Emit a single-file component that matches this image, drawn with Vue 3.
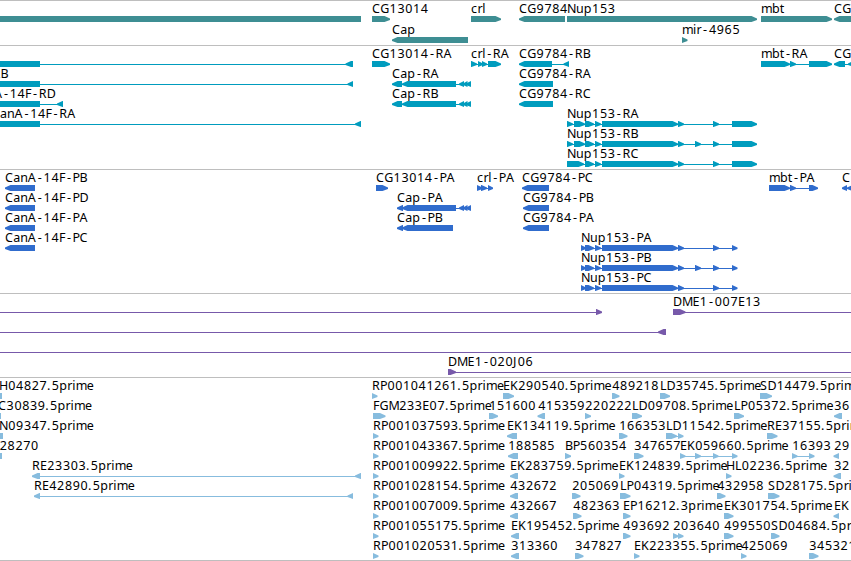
<template>
  <main class="browser">
    <section v-for="track in tracks" :key="track.name" class="track">
      <svg class="track-canvas" width="851" :height="track.height">
        <g v-for="(f, i) in track.features" :key="i" :fill="track.color">
          <rect
            v-if="f.line"
            :x="f.line[0]"
            :y="f.row * track.step + 18"
            :width="f.line[1] - f.line[0]"
            height="1"
            shape-rendering="crispEdges"
          />
          <polygon
            v-for="(b, k) in f.blocks"
            :key="k"
            :points="blockPoints(b, f.dir, f.row * track.step + 15)"
          />
          <text
            v-if="f.label"
            class="label"
            :x="charPositions(f.label, f.x)"
            :y="f.row * track.step + 12"
          >{{ f.label }}</text>
        </g>
      </svg>
    </section>
  </main>
</template>

<script setup>
const advances = {
  A: 8.3, B: 7.7, C: 8.3, D: 9, E: 7, F: 6.4, G: 9, H: 9, J: 4.6, K: 7.9,
  L: 6.5, M: 10.5, N: 9, P: 7.1, R: 8, S: 7.4,
  a: 7, b: 7.7, c: 6.4, e: 7, i: 3.5, l: 3.3, m: 11.1, n: 7.5, p: 8.1,
  r: 4.9, t: 4.5, u: 7.7, '-': 7.2, '.': 4.4,
}

const charPositions = (label, start) => {
  let x = start
  return [...label]
    .map((c) => {
      // narrow glyphs are centred in their wider cell
      let at = x
      if (c === '-') at += 1.6
      else if (/\d/.test(c)) at += 0.3
      x += advances[c] || 7.8
      return at.toFixed(2)
    })
    .join(' ')
}

// dir: 1 = forward strand, -1 = reverse strand, 0 = no arrow head
const blockPoints = ([a, b], dir, y) => {
  const head = Math.min(5.5, b - a)
  if (dir > 0) {
    return `${a},${y} ${b - head},${y} ${b},${y + 2.4} ${b},${y + 4} ${b - head},${y + 6} ${a},${y + 6}`
  }
  if (dir < 0) {
    return `${b},${y} ${a + head},${y} ${a},${y + 2.4} ${a},${y + 4} ${a + head},${y + 6} ${b},${y + 6}`
  }
  return `${a},${y} ${b},${y} ${b},${y + 6} ${a},${y + 6}`
}

const feature = (row, label, x, dir, blocks, line) => ({ row, label, x, dir, blocks, line })

const capTail = [[459, 464], [463, 467.5], [466, 471]]
const nupStart = [[567, 573], [574, 585], [585, 594], [595, 601]]
const nupMid = [[602, 678], [678, 684], [713, 719]]
const nupProtein = [[581, 586], [585, 594], [595, 601], ...nupMid, [732, 737.5]]

const tracks = [
  {
    name: 'genes',
    color: '#3e8e93',
    height: 44,
    step: 21,
    features: [
      feature(0, '', 0, 0, [[0, 361]]),
      feature(0, 'CG13014', 372, 1, [[372, 390]]),
      feature(0, 'crl', 471, 1, [[471, 501]]),
      feature(0, 'CG9784', 519, -1, [[519, 565]]),
      feature(0, 'Nup153', 567, 1, [[567, 757]]),
      feature(0, 'mbt', 761, 1, [[761, 832]]),
      feature(0, 'CG', 834, -1, [[834, 860]]),
      feature(1, 'Cap', 392, -1, [[392, 468]]),
      feature(1, 'mir-4965', 682, 1, [[682, 687.5]]),
    ],
  },
  {
    name: 'transcripts',
    color: '#009cbe',
    height: 123,
    step: 20,
    features: [
      feature(0, '', 0, 0, [[0, 40]], [40, 348]),
      feature(0, '', 0, -1, [[345.5, 353]]),
      feature(0, 'CG13014-RA', 372, 1, [[372, 390]]),
      feature(0, 'crl-RA', 471, 1, [[471, 477], [478, 483], [482, 487], [488, 501]], [471, 490]),
      feature(0, 'CG9784-RB', 519, -1, [[519, 552], [563.5, 569]], [552, 565]),
      feature(0, 'mbt-RA', 761, 1, [[761, 790], [790, 796], [809, 832]], [788, 810]),
      feature(0, 'CG', 834, -1, [[834, 845], [848, 860]], [844, 851]),
      feature(1, 'RB', -7.5, 0, [[0, 40]], [40, 350]),
      feature(1, '', 0, -1, [[347.5, 353]]),
      feature(1, 'Cap-RA', 392, -1, [[392, 402], [402, 456], ...capTail], [400, 468]),
      feature(1, 'CG9784-RA', 519, -1, [[519, 553]]),
      feature(2, 'A-14F-RD', -6, 0, [[0, 40]], [40, 60]),
      feature(2, '', 0, -1, [[57, 63]]),
      feature(2, 'Cap-RB', 392, -1, [[392, 402], [402, 456], ...capTail], [400, 468]),
      feature(2, 'CG9784-RC', 519, -1, [[519, 553]]),
      feature(3, 'anA-14F-RA', 0, 0, [[0, 40]], [40, 358]),
      feature(3, '', 0, -1, [[355, 361]]),
      feature(3, 'Nup153-RA', 567, 1, [...nupStart, ...nupMid, [732, 757]], [570, 735]),
      feature(4, 'Nup153-RB', 567, 1, [...nupStart, ...nupMid, [695, 701], [732, 757]], [570, 735]),
      feature(5, 'Nup153-RC', 567, 1, [[567, 584], ...nupStart.slice(2), ...nupMid, [732, 757]], [570, 735]),
    ],
  },
  {
    name: 'proteins',
    color: '#306ccd',
    height: 123,
    step: 20,
    features: [
      feature(0, 'CanA-14F-PB', 5, -1, [[5, 35]]),
      feature(1, 'CanA-14F-PD', 5, -1, [[5, 35]]),
      feature(2, 'CanA-14F-PA', 5, -1, [[5, 35]]),
      feature(3, 'CanA-14F-PC', 5, -1, [[5, 35]]),
      feature(0, 'CG13014-PA', 376, 1, [[376, 388]]),
      feature(0, 'crl-PA', 477, 1, [[477, 482.5], [481, 487], [488, 493]], [478, 490]),
      feature(0, 'CG9784-PC', 522, -1, [[522, 549]]),
      feature(0, 'mbt-PA', 769, 1, [[769, 790], [790, 796], [809, 818]], [788, 810]),
      feature(0, 'C', 842, -1, [[842, 847], [847, 853]], [844, 851]),
      feature(1, 'Cap-PA', 397, -1, [[397, 403], [402, 456], ...capTail], [400, 468]),
      feature(1, 'CG9784-PB', 523, -1, [[523, 549]]),
      feature(2, 'Cap-PB', 397, -1, [[397, 403], [402, 453]], [400, 405]),
      feature(2, 'CG9784-PA', 523, -1, [[523, 549]]),
      feature(3, 'Nup153-PA', 581, 1, nupProtein, [583, 735]),
      feature(4, 'Nup153-PB', 581, 1, [...nupProtein, [695, 701]], [583, 735]),
      feature(5, 'Nup153-PC', 581, 1, nupProtein, [583, 735]),
    ],
  },
  {
    name: 'clones',
    color: '#7759aa',
    height: 83,
    step: 20,
    features: [
      feature(0, '', 0, 1, [[596, 602]], [0, 599]),
      feature(0, 'DME1-007E13', 673, 1, [[673, 685.5]], [680, 851]),
      feature(1, '', 0, -1, [[658, 666]], [0, 662]),
      feature(2, '', 0, 0, [], [0, 851]),
      feature(3, 'DME1-020J06', 448, 1, [[448, 456]], [452, 851]),
    ],
  },
  {
    name: 'ests',
    color: '#87bcde',
    height: 182,
    step: 20,
    features: [
      feature(0, 'H04827.5prime', -1, 0, [[0, 2]]),
      feature(0, 'RP001041261.5prime', 372, 1, [[372, 377.5]]),
      feature(0, 'EK290540.5prime', 503, 1, [[503, 514]]),
      feature(0, '489218', 612, 1, [[612, 619.5]]),
      feature(0, 'LD35745.5prime', 660, 1, [[660, 670]]),
      feature(0, 'SD14479.5prime', 760, 1, [[760, 772]]),
      feature(1, 'C30839.5prime', -2, 0, [[0, 1]]),
      feature(1, 'FGM233E07.5prime', 373, 1, [[373, 385.5]]),
      feature(1, '151600', 489, 1, [[489, 498]]),
      feature(1, '415359', 538, -1, [[537.5, 545]]),
      feature(1, '220222', 585, 1, [[585, 591]]),
      feature(1, 'LD09708.5prime', 632, 1, [[632, 642]]),
      feature(1, 'LP05372.5prime', 734, 1, [[734, 744]]),
      feature(1, '36', 834, -1, [[834, 842]]),
      feature(2, 'N09347.5prime', -1, 0, [[0, 3]]),
      feature(2, 'RP001037593.5prime', 373, 1, [[373, 378.5]]),
      feature(2, 'EK134119.5prime', 507, -1, [[507, 517]]),
      feature(2, '166353', 619, 1, [[619, 627.5]]),
      feature(2, 'LD11542.5prime', 666, 1, [[666, 677], [678, 683.5]], [670, 680]),
      feature(2, 'RE37155.5prime', 767, 1, [[767, 777.5]]),
      feature(3, '28270', -0.5, 0, [[0, 2]]),
      feature(3, 'RP001043367.5prime', 373, 1, [[373, 378.5]]),
      feature(3, '188585', 508, -1, [[508, 518]]),
      feature(3, 'BP560354', 565, 1, [[565, 571]]),
      feature(3, '347657', 634, 1, [[634, 643.5]]),
      feature(3, 'EK059660.5prime', 680, 1, [[680, 685.5], [695, 701], [713, 718.5], [732, 737.5]], [682, 735]),
      feature(3, '16393', 792, 1, [[792, 797.5], [809, 814.5]], [794, 812]),
      feature(3, '29', 834, -1, [[833.5, 839]]),
      feature(4, 'RE23303.5prime', 32, -1, [[32, 40], [355, 361]], [38, 358]),
      feature(4, 'RP001009922.5prime', 373, 1, [[373, 378.5]]),
      feature(4, 'EK283759.5prime', 510, -1, [[510, 518]]),
      feature(4, 'EK124839.5prime', 619, 1, [[619, 624.5]]),
      feature(4, 'HL02236.5prime', 726, 1, [[726, 731.5]]),
      feature(4, '32', 834, -1, [[833.5, 841]]),
      feature(5, 'RE42890.5prime', 34, -1, [[34, 40], [347.5, 353]], [38, 350]),
      feature(5, 'RP001028154.5prime', 373, 1, [[373, 378.5]]),
      feature(5, '432672', 510, -1, [[510, 518]]),
      feature(5, '205069', 572, 1, [[572, 580.5]]),
      feature(5, 'LP04319.5prime', 620, 1, [[620, 630.5]]),
      feature(5, '432958', 717, 1, [[717, 725.5]]),
      feature(5, 'SD28175.5prime', 768, 1, [[768, 779.5]]),
      feature(6, 'RP001007009.5prime', 373, 1, [[373, 378.5]]),
      feature(6, '432667', 510, -1, [[510, 518]]),
      feature(6, '482363', 573, 1, [[573, 581.5]]),
      feature(6, 'EP16212.3prime', 623, 1, [[623, 630.5]]),
      feature(6, 'EK301754.5prime', 724, 1, [[724, 733.5]]),
      feature(6, 'EK', 834, -1, [[833.5, 839]]),
      feature(7, 'RP001055175.5prime', 373, 1, [[373, 378.5]]),
      feature(7, 'EK195452.5prime', 511, -1, [[511, 519]]),
      feature(7, '493692', 623, 1, [[623, 630.5]]),
      feature(7, '203640', 673, 1, [[673, 678.5], [678, 683.5]]),
      feature(7, '499550', 724, 1, [[724, 733.5]]),
      feature(7, 'SD04684.5prime', 771, 1, [[771, 779.5]]),
      feature(8, 'RP001020531.5prime', 373, 1, [[373, 378.5]]),
      feature(8, '313360', 511, -1, [[511, 519]]),
      feature(8, '347827', 575, 1, [[575, 583.5]]),
      feature(8, 'EK223355.5prime', 634, 1, [[634, 639.5]]),
      feature(8, '425069', 741, 1, [[741, 746.5]]),
      feature(8, '345321', 809, 1, [[809, 818.5]]),
    ],
  },
]
</script>

<style scoped>
.browser {
  width: 851px;
  height: 561px;
  box-sizing: border-box;
  overflow: hidden;
  background: #ffffff;
  border-bottom: 1px solid #bebebe;
}

.track {
  border-top: 1px solid #bebebe;
}

.track-canvas {
  display: block;
  overflow: hidden;
}

.label {
  font-family: 'Noto Sans', 'DejaVu Sans', sans-serif;
  font-size: 12.5px;
  fill: #000000;
}
</style>
